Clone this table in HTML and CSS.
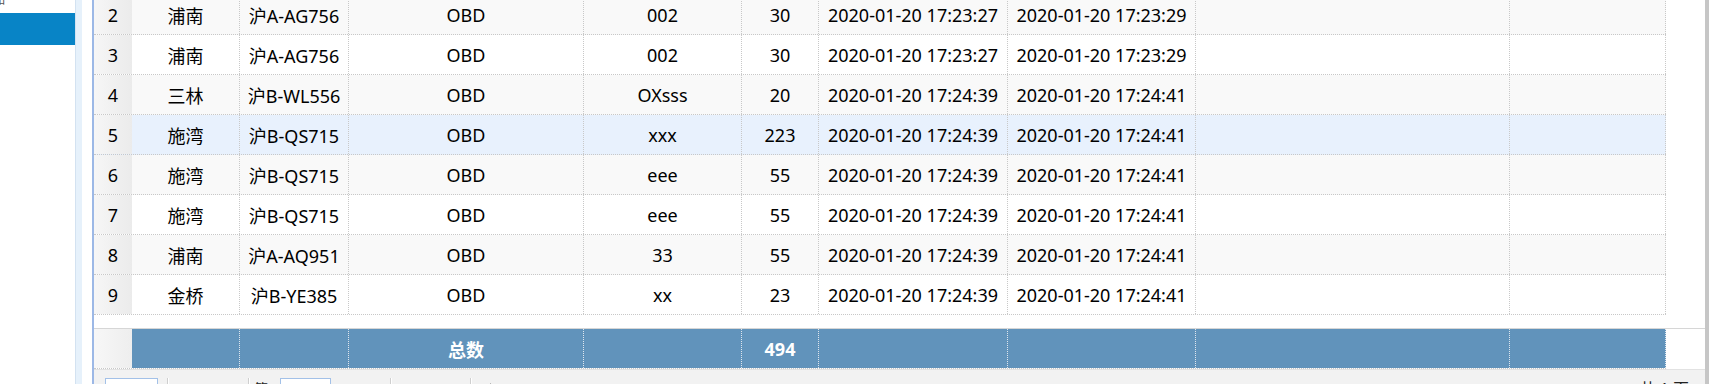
FILE: index.html
```html
<!DOCTYPE html>
<html lang="zh-CN">
<head>
<meta charset="utf-8">
<title>数据列表</title>
<link rel="stylesheet" href="styles.css">
</head>
<body>
<div class="app">
  <aside class="sidebar">
    <div class="side-prev"><span class="side-prev-text">品</span></div>
    <div class="side-item active"></div>
  </aside>
  <div class="splitter"></div>
  <div class="spacer"></div>
  <main class="panel">
    <div class="body-view">
      <div class="rows">
        <div class="row stripe"><div class="rn">2</div><div class="c">浦南</div><div class="c">沪A-AG756</div><div class="c">OBD</div><div class="c">002</div><div class="c">30</div><div class="c">2020-01-20 17:23:27</div><div class="c">2020-01-20 17:23:29</div><div class="c"></div><div class="c"></div></div>
        <div class="row"><div class="rn">3</div><div class="c">浦南</div><div class="c">沪A-AG756</div><div class="c">OBD</div><div class="c">002</div><div class="c">30</div><div class="c">2020-01-20 17:23:27</div><div class="c">2020-01-20 17:23:29</div><div class="c"></div><div class="c"></div></div>
        <div class="row stripe"><div class="rn">4</div><div class="c">三林</div><div class="c">沪B-WL556</div><div class="c">OBD</div><div class="c">OXsss</div><div class="c">20</div><div class="c">2020-01-20 17:24:39</div><div class="c">2020-01-20 17:24:41</div><div class="c"></div><div class="c"></div></div>
        <div class="row hover"><div class="rn">5</div><div class="c">施湾</div><div class="c">沪B-QS715</div><div class="c">OBD</div><div class="c">xxx</div><div class="c">223</div><div class="c">2020-01-20 17:24:39</div><div class="c">2020-01-20 17:24:41</div><div class="c"></div><div class="c"></div></div>
        <div class="row stripe"><div class="rn">6</div><div class="c">施湾</div><div class="c">沪B-QS715</div><div class="c">OBD</div><div class="c">eee</div><div class="c">55</div><div class="c">2020-01-20 17:24:39</div><div class="c">2020-01-20 17:24:41</div><div class="c"></div><div class="c"></div></div>
        <div class="row"><div class="rn">7</div><div class="c">施湾</div><div class="c">沪B-QS715</div><div class="c">OBD</div><div class="c">eee</div><div class="c">55</div><div class="c">2020-01-20 17:24:39</div><div class="c">2020-01-20 17:24:41</div><div class="c"></div><div class="c"></div></div>
        <div class="row stripe"><div class="rn">8</div><div class="c">浦南</div><div class="c">沪A-AQ951</div><div class="c">OBD</div><div class="c">33</div><div class="c">55</div><div class="c">2020-01-20 17:24:39</div><div class="c">2020-01-20 17:24:41</div><div class="c"></div><div class="c"></div></div>
        <div class="row"><div class="rn">9</div><div class="c">金桥</div><div class="c">沪B-YE385</div><div class="c">OBD</div><div class="c">xx</div><div class="c">23</div><div class="c">2020-01-20 17:24:39</div><div class="c">2020-01-20 17:24:41</div><div class="c"></div><div class="c"></div></div>
      </div>
    </div>
    <div class="footer">
      <div class="row foot"><div class="rn"></div><div class="c"></div><div class="c"></div><div class="c">总数</div><div class="c"></div><div class="c">494</div><div class="c"></div><div class="c"></div><div class="c"></div><div class="c"></div></div>
    </div>
    <div class="pager">
      <div class="pg-input size"></div>
      <div class="sep"></div>
      <div class="pg-gap"></div>
      <div class="sep"></div>
      <span class="pg-text first">第</span>
      <div class="pg-input page"></div>
      <div class="pg-gap2"></div>
      <div class="sep"></div>
      <div class="pg-gap3"></div>
      <div class="sep"></div>
      <div class="pg-icon"></div>
      <div class="pg-fill"></div>
      <span class="pg-text info">共 1 页</span>
    </div>
  </main>
  <div class="edge"></div>
</div>
</body>
</html>
```

FILE: styles.css
```css
* { box-sizing: border-box; }

html, body {
  margin: 0;
  padding: 0;
  height: 100%;
  overflow: hidden;
  background: #ffffff;
}

body {
  font-family: "Noto Sans", "Noto Sans CJK SC", sans-serif;
  color: #000;
}

.app {
  display: flex;
  height: 384px;
  width: 1709px;
  overflow: hidden;
}

.sidebar {
  width: 75px;
  flex: none;
  background: #fff;
  display: flex;
  flex-direction: column;
}

.side-prev {
  height: 13px;
  overflow: hidden;
}

.side-prev-text {
  display: block;
  font-size: 12px;
  line-height: 12px;
  margin-left: -7px;
  margin-top: -6px;
  color: #555;
}

.side-item {
  height: 32px;
}

.side-item.active {
  background: #0884c6;
}

.splitter {
  width: 7px;
  flex: none;
  background: #e6f1fb;
  border-left: 1px solid #d3e2f1;
}

.spacer {
  width: 10px;
  flex: none;
  background: #fff;
}

.panel {
  flex: 1;
  min-width: 0;
  border-left: 2px solid #9cb8e6;
  display: flex;
  flex-direction: column;
  background: #fff;
}

.body-view {
  height: 328px;
  flex: none;
  overflow: hidden;
}

.rows {
  margin-top: -5px;
}

.row {
  display: grid;
  grid-template-columns: 38px 108px 109px 235px 158px 77px 189px 188px 314px 156px;
  height: 40px;
  width: 1572px;
  border-bottom: 1px dotted #c8c8c8;
  background: #fff;
  font-size: 18px;
}

.row .c {
  display: flex;
  align-items: center;
  justify-content: center;
  border-right: 1px dotted #c8c8c8;
  white-space: nowrap;
}

.row .rn {
  display: flex;
  align-items: center;
  justify-content: center;
  background: linear-gradient(to right, #f6f6f6, #ebebeb);
}

.row.stripe { background: #f9f9f9; }
.row.hover { background: #e8f1fd; }

.footer {
  border-top: 1px solid #d6d6d6;
  flex: none;
}

.row.foot {
  background: #fff;
  height: 40px;
}

.row.foot .c {
  background: #6193bb;
  color: #fff;
  font-weight: 700;
  border-right: 1px dotted #dfe6ee;
}

.row.foot .rn {
  background: linear-gradient(to right, #f7f7f7, #eeeeee);
}

.pager {
  flex: 1;
  background: #f2f2f2;
  border-top: 1px solid #e2e2e2;
  display: flex;
  align-items: flex-start;
  padding: 8px 0 0 11px;
}

.pg-input {
  height: 24px;
  background: #fff;
  border: 1px solid #a3c1e8;
  flex: none;
}

.pg-input.size { width: 53px; }
.pg-input.page { width: 51px; margin-left: 12px; }

.sep {
  width: 2px;
  height: 24px;
  flex: none;
  border-left: 1px solid #cfcfcf;
  border-right: 1px solid #ffffff;
  margin-left: 9px;
}

.pg-gap { width: 70px; flex: none; }
.pg-gap2 { width: 50px; flex: none; }
.pg-gap3 { width: 69px; flex: none; }

.pg-text {
  font-size: 14px;
  line-height: 14px;
  margin-top: 4px;
  color: #222;
  flex: none;
}

.pg-text.first { margin-left: 4px; }

.pg-icon {
  width: 0;
  height: 0;
  margin-left: 18px;
  margin-top: 5px;
  border-top: 6px solid transparent;
  border-bottom: 6px solid transparent;
  border-left: 7px solid #8c8c8c;
  flex: none;
}

.pg-fill { flex: 1; }

.pg-text.info { margin-right: 16px; font-size: 16px; }

.edge {
  width: 4px;
  flex: none;
  background: #c6c6c6;
}
```
